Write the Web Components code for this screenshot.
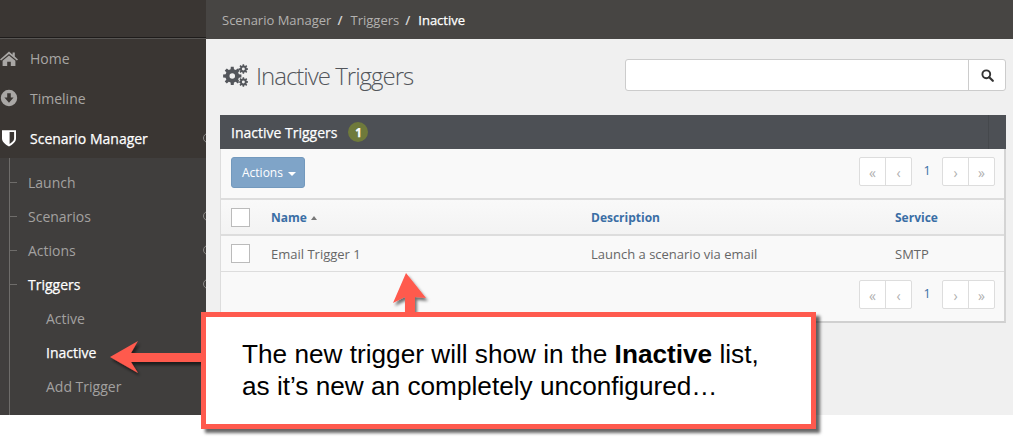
<!DOCTYPE html>
<html>
<head>
<meta charset="utf-8">
<title>Inactive Triggers</title>
<style>
  html, body { margin: 0; background: #fff; }
  body { font-family: "Open Sans", sans-serif; width: 1013px; height: 441px; overflow: hidden; position: relative; }
</style>
</head>
<body>
<app-shell>
  <side-bar slot="side">
    <nav-item icon="home">Home</nav-item>
    <nav-item icon="timeline">Timeline</nav-item>
    <nav-item icon="shield" active more>Scenario Manager</nav-item>
    <sub-nav>
      <sub-item>Launch</sub-item>
      <sub-item more>Scenarios</sub-item>
      <sub-item more>Actions</sub-item>
      <sub-item active more>Triggers</sub-item>
      <sub-item nested>Active</sub-item>
      <sub-item nested active>Inactive</sub-item>
      <sub-item nested>Add Trigger</sub-item>
    </sub-nav>
  </side-bar>
  <bread-crumbs slot="top">
    <a>Scenario Manager</a><a>Triggers</a><a class="last">Inactive</a>
  </bread-crumbs>
  <title-row>Inactive Triggers</title-row>
  <triggers-panel></triggers-panel>
</app-shell>
<note-overlay>The new trigger will show in the <b>Inactive</b> list,<br>as it’s new an completely unconfigured…</note-overlay>

<script>
// FontAwesome style icons, drawn by hand
const ICONS = {
    home: '<svg width="18" height="15" viewBox="0 0 18 15"><path fill="currentColor" d="M9 0.6 L12.6 3.7 V1.4 H14.8 V5.6 L18 8.4 L16.9 9.6 L9 2.9 L1.1 9.6 L0 8.4 Z M9 4.4 L15.4 9.8 V15 H10.8 V10.8 H7.2 V15 H2.6 V9.8 Z"/></svg>',
    timeline: '<svg width="18" height="18" viewBox="0 0 18 18"><path fill="currentColor" fill-rule="evenodd" d="M9 .8 A8.2 8.2 0 1 1 9 17.2 A8.2 8.2 0 1 1 9 .8 Z M7.2 4.2 V8.6 H4.4 L9 13.8 L13.6 8.6 H10.8 V4.2 Z"/></svg>',
    shield: '<svg width="16" height="18" viewBox="0 0 16 18"><path fill="currentColor" fill-rule="evenodd" d="M1 1.2 H15 V9.5 C15 13 11.5 15.6 8 17.4 C4.5 15.6 1 13 1 9.5 Z M8.6 3 V14.9 C10.8 13.6 13.1 11.8 13.1 9.5 V3 Z"/></svg>',
    search: '<svg width="13" height="13" viewBox="0 0 13 13"><circle cx="5.3" cy="5.3" r="3.9" fill="none" stroke="currentColor" stroke-width="1.9"/><path d="M8.2 8.2 L11.8 11.8" stroke="currentColor" stroke-width="2.2" stroke-linecap="round"/></svg>'
};

// builds the path of one gear, teeth are plain trapezoids
function gearPath(cx, cy, outer, inner, hole, teeth) {
    let d = '';
    const step = Math.PI * 2 / teeth;
    const pt = (r, a) => (cx + r * Math.cos(a)).toFixed(2) + ' ' + (cy + r * Math.sin(a)).toFixed(2);
    for (let i = 0; i < teeth; i++) {
        const a = i * step;
        d += (i ? 'L' : 'M') + pt(inner, a - step * 0.32);
        d += 'L' + pt(outer, a - step * 0.2);
        d += 'L' + pt(outer, a + step * 0.2);
        d += 'L' + pt(inner, a + step * 0.32);
    }
    d += 'Z M' + pt(hole, 0) + 'A' + hole + ' ' + hole + ' 0 1 0 ' + pt(hole, Math.PI) + 'A' + hole + ' ' + hole + ' 0 1 0 ' + pt(hole, 0) + 'Z';
    return d;
}

class AppShell extends HTMLElement {
    constructor() {
        super();
        this.attachShadow({ mode: 'open' });
        this.shadowRoot.innerHTML = `
            <style>
                :host { display: flex; width: 1013px; height: 415px; overflow: hidden; }
                .main { flex: 1; display: flex; flex-direction: column; background: #f0f0f0; min-width: 0; }
                .body { padding: 20px 7px 0 14px; display: flex; flex-direction: column; }
            </style>
            <slot name="side"></slot>
            <div class="main">
                <slot name="top"></slot>
                <div class="body"><slot></slot></div>
            </div>
        `;
    }
}

class SideBar extends HTMLElement {
    constructor() {
        super();
        this.attachShadow({ mode: 'open' });
        this.shadowRoot.innerHTML = `
            <style>
                :host { display: flex; flex-direction: column; width: 206px; flex: none; background: #3a3633; overflow: hidden; }
                .logo { height: 37px; border-bottom: 1px solid #1e1c1b; box-shadow: 0 1px 0 #575553; flex: none; }
            </style>
            <div class="logo"></div>
            <slot></slot>
        `;
    }
}

class NavItem extends HTMLElement {
    constructor() {
        super();
        this.attachShadow({ mode: 'open' });
        const icon = ICONS[this.getAttribute('icon')] || '';
        this.shadowRoot.innerHTML = `
            <style>
                :host { display: flex; align-items: center; height: 40px; flex: none; position: relative;
                        font-size: 14px; color: #a8a6a4; }
                :host([active]) { color: #fff; font-weight: 500; -webkit-text-stroke: .25px #fff; }
                .ic { width: 18px; margin: 0 12px 0 0; display: flex; justify-content: center; }
                :host([active]) .ic { color: #fff; }
                :host(:not([active])) .ic { color: #a9a7a5; }
                .more { display: none; position: absolute; left: 203px; top: 15px; width: 8px; height: 8px;
                        border: 1px solid #8b8987; border-radius: 50%; }
                :host([more]) .more { display: block; }
            </style>
            <span class="ic">${icon}</span><slot></slot><span class="more"></span>
        `;
    }
}

class SubNav extends HTMLElement {
    constructor() {
        super();
        this.attachShadow({ mode: 'open' });
        this.shadowRoot.innerHTML = `
            <style>
                :host { display: block; flex: 1; background: #403e3d; padding-top: 7px; position: relative; }
                .line { position: absolute; left: 9px; top: 0; bottom: 0; width: 1px; background: #6e6c6a; }
            </style>
            <div class="line"></div>
            <slot></slot>
        `;
    }
}

class SubItem extends HTMLElement {
    constructor() {
        super();
        this.attachShadow({ mode: 'open' });
        this.shadowRoot.innerHTML = `
            <style>
                :host { display: flex; align-items: center; height: 34px; padding-left: 28px; position: relative;
                        font-size: 14px; color: #a3a1a0; }
                :host([nested]) { padding-left: 46px; }
                :host([active]) { color: #fff; font-weight: 500; -webkit-text-stroke: .25px #fff; }
                .tick { position: absolute; left: 10px; top: 17px; width: 7px; height: 1px; background: #6e6c6a; }
                :host([nested]) .tick { display: none; }
                .more { display: none; position: absolute; left: 203px; top: 12px; width: 8px; height: 8px;
                        border: 1px solid #8b8987; border-radius: 50%; }
                :host([more]) .more { display: block; }
            </style>
            <span class="tick"></span><slot></slot><span class="more"></span>
        `;
    }
}

class BreadCrumbs extends HTMLElement {
    constructor() {
        super();
        this.attachShadow({ mode: 'open' });
        this.shadowRoot.innerHTML = `
            <style>
                :host { display: flex; align-items: center; height: 39px; flex: none; padding-left: 16px;
                        background: #474543; color: #b3b1af; font-size: 13px; }
                ::slotted(a)::after { content: "/"; margin: 0 8px 0 6px; color: #d5d4d3; font-weight: 600; }
                ::slotted(a.last) { color: #fff; font-weight: 500; -webkit-text-stroke: .25px #fff; }
                ::slotted(a.last)::after { content: none; }
            </style>
            <slot></slot>
        `;
    }
}

class TitleRow extends HTMLElement {
    constructor() {
        super();
        this.attachShadow({ mode: 'open' });
        this.shadowRoot.innerHTML = `
            <style>
                :host { display: flex; align-items: center; justify-content: space-between; height: 32px; margin-bottom: 24px; }
                h1 { display: flex; align-items: center; margin: 0; padding-left: 3px; font-size: 24px; font-weight: 300;
                     letter-spacing: -1px; color: #53565b; }
                svg { margin-right: 8px; }
                .search { display: flex; width: 381px; height: 32px; box-sizing: border-box; border: 1px solid #ccc;
                          border-radius: 3px; background: #fff; margin-left: auto; }
                .field { flex: 1; border-right: 1px solid #ccc; }
                .go { width: 36px; display: flex; align-items: center; justify-content: center; color: #333; }
                .go svg { margin: 1px 0 0 1px; }
            </style>
            <h1><svg width="25" height="25" viewBox="0 0 27 27"><path fill="#53565b" fill-rule="evenodd" d="${gearPath(10, 14, 10, 7.4, 3, 8)} ${gearPath(22, 6.5, 5.2, 3.8, 1.6, 8)} ${gearPath(22, 20.5, 5.2, 3.8, 1.6, 8)}"/></svg><slot></slot></h1>
            <div class="search"><div class="field"></div><div class="go">${ICONS.search}</div></div>
        `;
    }
}

class PagerControls extends HTMLElement {
    constructor() {
        super();
        this.attachShadow({ mode: 'open' });
        this.shadowRoot.innerHTML = `
            <style>
                :host { display: flex; align-items: center; font-size: 12.5px; color: #3a6ea5; }
                .group { display: flex; width: 53px; height: 29px; box-sizing: border-box; border: 1px solid #ddd; border-radius: 2px; background: #fff; }
                .group span { flex: 1; display: flex; align-items: center; justify-content: center; color: #b0b0b0; font-size: 14px; padding-top: 1px; box-sizing: border-box; }
                .group span + span { border-left: 1px solid #ddd; }
                .num { width: 30px; text-align: center; margin-top: -2px; }
            </style>
            <div class="group"><span>«</span><span>‹</span></div>
            <div class="num">1</div>
            <div class="group"><span>›</span><span>»</span></div>
        `;
    }
}

class TriggersPanel extends HTMLElement {
    constructor() {
        super();
        this.attachShadow({ mode: 'open' });
        this.shadowRoot.innerHTML = `
            <style>
                :host { display: block; width: 786px; box-sizing: border-box; background: #f9f9f9;
                        border-left: 1px solid #ddd; border-right: 2px solid #d4d4d4; border-bottom: 2px solid #d0d0d0; font-size: 13px; }
                .head { display: flex; align-items: center; height: 34px; background: #4d5055; margin: 0 -2px 0 -1px;
                        padding-left: 11px; color: #fff; font-size: 14px; font-weight: 500; -webkit-text-stroke: .25px #fff; position: relative; }
                .head::after { content: ""; position: absolute; left: 768px; top: 0; bottom: 0; width: 1px; background: #45484c; }
                .badge { width: 20px; height: 20px; border-radius: 50%; background: #6f7a3b; margin-left: 11px;
                         font-size: 11.5px; font-weight: 700; display: flex; align-items: center; justify-content: center; }
                .bar { display: flex; align-items: flex-start; justify-content: space-between; height: 49px; padding: 8px 9px 0 10px; box-sizing: border-box; }
                .btn { display: flex; align-items: center; gap: 5px; width: 74px; height: 31px; box-sizing: border-box; padding-left: 10px;
                       background: #7fa4c8; border: 1px solid #7399bd; border-radius: 3px; color: #fff; font-size: 12px; }
                .caret { width: 0; height: 0; border: 4px solid transparent; border-top-color: #fff; border-bottom: 0; margin-top: 2px; }
                .row { display: grid; grid-template-columns: 50px 320px 304px 1fr; align-items: center; }
                .row > div:first-child { padding-left: 10px; }
                .box { width: 19px; height: 19px; box-sizing: border-box; border: 1px solid #bbb; background: #fff; }
                .th { height: 38px; box-sizing: border-box; border-top: 2px solid #ddd; border-bottom: 2px solid #ddd;
                      background: linear-gradient(#f9f9f9, #f3f3f3); color: #3a6ea5; font-size: 12px; font-weight: 700; }
                .sort { display: inline-block; width: 0; height: 0; border: 3.5px solid transparent; border-bottom: 4px solid #777; border-top: 0; margin: 0 0 2px 4px; }
                .tr { height: 36px; box-sizing: border-box; border-bottom: 1px solid #ddd; color: #666; }
                .foot { height: 49px; justify-content: flex-end; }
            </style>
            <div class="head">Inactive Triggers<span class="badge">1</span></div>
            <div class="bar"><div class="btn">Actions<span class="caret"></span></div><pager-controls></pager-controls></div>
            <div class="row th"><div><div class="box"></div></div><div>Name<span class="sort"></span></div><div>Description</div><div>Service</div></div>
            <div class="row tr"><div><div class="box"></div></div><div>Email Trigger 1</div><div>Launch a scenario via email</div><div>SMTP</div></div>
            <div class="bar foot"><pager-controls></pager-controls></div>
        `;
    }
}

class NoteOverlay extends HTMLElement {
    constructor() {
        super();
        this.attachShadow({ mode: 'open' });
        this.shadowRoot.innerHTML = `
            <style>
                :host { display: block; position: absolute; left: 0; top: 0; width: 1013px; height: 441px; pointer-events: none; }
                svg { position: absolute; left: 0; top: 0; }
                .note { position: absolute; left: 201px; top: 312px; width: 615px; height: 117px; box-sizing: border-box;
                        border: 5px solid #ff5a4e; background: #fff; box-shadow: 4px 4px 3px rgba(0,0,0,.6);
                        padding: 21px 0 0 36px; font: 26.2px/32px "Liberation Sans", Arial, sans-serif; color: #000; white-space: nowrap; }
                b { font-weight: 700; }
            </style>
            <svg width="1013" height="441" viewBox="0 0 1013 441">
                <defs><filter id="sh" x="-20%" y="-20%" width="140%" height="140%"><feDropShadow dx="2" dy="3" stdDeviation="1.5" flood-color="#000" flood-opacity=".55"/></filter></defs>
                <g fill="#ff5a4e" filter="url(#sh)">
                    <path d="M110 357 L138 341 L131 353 H205 V362 H131 L138 373 Z"/>
                    <path d="M406 273 L426 298 L415 297 L415 316 H405 L405 297 L393 303 Z"/>
                </g>
            </svg>
            <div class="note"><slot></slot></div>
        `;
    }
}

customElements.define('app-shell', AppShell);
customElements.define('side-bar', SideBar);
customElements.define('nav-item', NavItem);
customElements.define('sub-nav', SubNav);
customElements.define('sub-item', SubItem);
customElements.define('bread-crumbs', BreadCrumbs);
customElements.define('title-row', TitleRow);
customElements.define('pager-controls', PagerControls);
customElements.define('triggers-panel', TriggersPanel);
customElements.define('note-overlay', NoteOverlay);
</script>
</body>
</html>
